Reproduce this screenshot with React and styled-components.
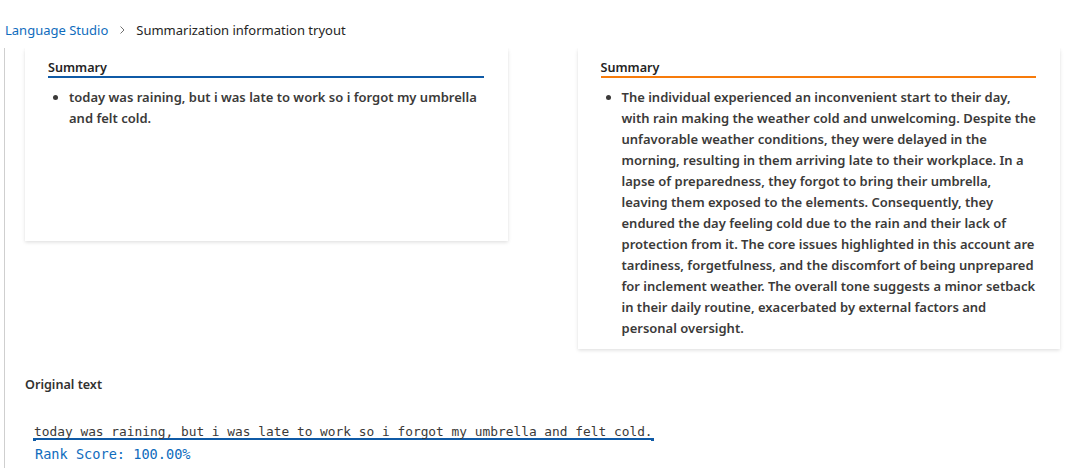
import React from "react"
import styled, { createGlobalStyle } from "styled-components"

const GlobalStyle = createGlobalStyle`
  html, body {
    margin: 0;
    padding: 0;
    background: #ffffff;
    height: 100%;
  }
  body {
    font-family: "Noto Sans", "Open Sans", sans-serif;
    color: #323130;
  }
`;

const Page = styled.div`
  width: 1067px;
  height: 468px;
  display: flex;
  flex-direction: column;
  overflow: hidden;
`;

const Breadcrumb = styled.nav`
  height: 48px;
  display: flex;
  align-items: center;
  gap: 8px;
  padding: 12px 0 0 5px;
  box-sizing: border-box;
  font-size: 13px;
`;

const Crumb = styled.span`
  color: ${p => (p.link ? "#0f6cbd" : "#242424")};
`;

const Chevron = () => (
  <svg width="12" height="12" viewBox="0 0 12 12">
    <path d="M4.5 2.5 L8 6 L4.5 9.5" fill="none" stroke="#707070" strokeWidth="1" />
  </svg>
);

const Frame = styled.main`
  flex: 1;
  margin-left: 4px;
  border-left: 1px solid #cfcfcf;
  padding: 0 7px 0 20px;
  overflow: hidden;
  min-height: 0;
`;

const Results = styled.section`
  display: grid;
  grid-template-columns: 1fr 1fr;
  column-gap: 70px;
  align-items: start;
`;

const Card = styled.div`
  background: #fff;
  min-height: ${p => p.minH || 0}px;
  box-sizing: border-box;
  padding: 12px 24px 10px 23px;
  box-shadow: 0 1.6px 3.6px rgba(0, 0, 0, 0.13), 0 0.3px 0.9px rgba(0, 0, 0, 0.1);
  clip-path: inset(0 -8px -8px -8px);
`;

const Heading = styled.h3`
  margin: 0;
  font-size: 12.6px;
  font-weight: 600;
  line-height: 16px;
  border-bottom: 2px solid ${p => p.accent};
  color: #242424;
`;

const Bullets = styled.ul`
  margin: 9px 0 0;
  padding: 0 0 0 21px;
  font-size: 13px;
  font-weight: 600;
  line-height: 21px;
  color: #3b3a39;
`;

const Section = styled.section`
  padding-top: 27px;
`;

const Label = styled.div`
  font-size: 12.6px;
  font-weight: 600;
  color: #323130;
  line-height: 18px;
`;

const Original = styled.div`
  margin-top: 30px;
  padding-left: 10px;
  font-family: "DejaVu Sans Mono", "Liberation Mono", monospace;
  font-size: 12.85px;
`;

const Marked = styled.span`
  position: relative;
  display: inline-block;
  line-height: 13px;
  color: #3b3a39;
  border-bottom: 2px solid #0f5aa6;
  padding: 0 1px;
  margin-left: -2px;

  &::before,
  &::after {
    content: "";
    position: absolute;
    bottom: -3px;
    width: 3px;
    height: 3px;
    background: #0f5aa6;
  }
  &::before { left: 0; }
  &::after { right: 0; }
`;

const Score = styled.div`
  color: #0f6cbd;
  font-size: 13.6px;
  line-height: 18px;
  margin-top: 5px;
`;

const longSummary =
  "The individual experienced an inconvenient start to their day, with rain making the weather cold and unwelcoming. Despite the unfavorable weather conditions, they were delayed in the morning, resulting in them arriving late to their workplace. In a lapse of preparedness, they forgot to bring their umbrella, leaving them exposed to the elements. Consequently, they endured the day feeling cold due to the rain and their lack of protection from it. The core issues highlighted in this account are tardiness, forgetfulness, and the discomfort of being unprepared for inclement weather. The overall tone suggests a minor setback in their daily routine, exacerbated by external factors and personal oversight.";

const original =
  "today was raining, but i was late to work so i forgot my umbrella and felt cold.";

export default function App() {
  return (
    <Page>
      <GlobalStyle />
      <Breadcrumb>
        <Crumb link>Language Studio</Crumb>
        <Chevron />
        <Crumb>Summarization information tryout</Crumb>
      </Breadcrumb>
      <Frame>
        <Results>
          <Card minH={193}>
            <Heading accent="#0f5aa6">Summary</Heading>
            <Bullets>
              <li>{original}</li>
            </Bullets>
          </Card>
          <Card>
            <Heading accent="#f77b0a">Summary</Heading>
            <Bullets>
              <li>{longSummary}</li>
            </Bullets>
          </Card>
        </Results>
        <Section>
          <Label>Original text</Label>
          <Original>
            <Marked>{original}</Marked>
            <Score>Rank Score: 100.00%</Score>
          </Original>
        </Section>
      </Frame>
    </Page>
  )
}
